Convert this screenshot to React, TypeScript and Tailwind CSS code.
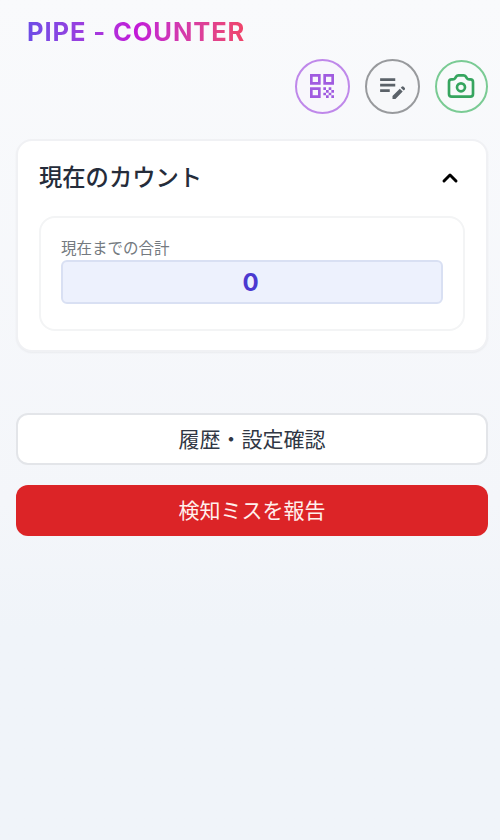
import { HiChevronUp, HiOutlineCamera } from "react-icons/hi";
import { MdEditNote, MdQrCode } from "react-icons/md";

export default function App() {
  return (
    <div className="h-[840px] w-[500px] overflow-hidden bg-linear-to-b from-[#f9fafc] via-[#f4f6fa] via-60% to-[#f0f4f9] to-75% font-['Inter','Noto_Sans_CJK_JP',sans-serif]">
      <header className="pt-[14px] pr-[12.5px] pl-[27px]">
        <h1 className="w-fit bg-linear-to-r from-[#6d4ce6] via-[#c218d8] via-50% to-[#f04468] bg-clip-text text-[25.5px] leading-[35px] font-bold tracking-[0.9px] whitespace-nowrap text-transparent">
          PIPE - COUNTER
        </h1>
        <div className="mt-[9.5px] flex items-center justify-end gap-[15px]">
          <button className="flex size-[55px] items-center justify-center rounded-full border-2 border-[#bf88ea] bg-[#f8f7fc] text-[#a05be0]">
            <MdQrCode size={32} />
          </button>
          <button className="flex size-[55px] items-center justify-center rounded-full border-2 border-[#989a9d] bg-[#f7f8fa] text-[#5b6269]">
            <MdEditNote size={33} />
          </button>
          <button className="flex size-[53px] items-center justify-center rounded-full border-2 border-[#7acb94] bg-[#f8fafb] text-[#36a55f]">
            <HiOutlineCamera size={32} />
          </button>
        </div>
      </header>
      <main className="pr-3 pl-4">
        <section className="mt-[25.5px] h-[213px] rounded-2xl border-2 border-[#f0f1f4] bg-white px-[21px] pt-[21px] shadow-xs">
          <div className="flex h-8 items-center justify-between">
            <h2 className="text-[23.3px] leading-8 font-medium text-[#252c3a]">現在のカウント</h2>
            <HiChevronUp size={30} className="text-black" />
          </div>
          <div className="mt-[22px] h-[115px] rounded-2xl border-2 border-[#f3f4f5] px-5 pt-[20px]">
            <p className="text-[15.5px] leading-[22px] text-[#747a80]">現在までの合計</p>
            <div className="flex h-11 items-center justify-center rounded-md border-2 border-[#d9e0f3] bg-[#edf1fd] pr-[3px] pt-px text-2xl font-bold text-[#4b39d0]">
              0
            </div>
          </div>
        </section>
        <button className="mt-[61px] flex h-[52px] w-full items-center justify-center rounded-xl border-2 border-[#e3e5e9] bg-white pt-px text-[21px] text-[#303744]">
          履歴・設定確認
        </button>
        <button className="mt-[20px] flex h-[51px] w-full items-center justify-center rounded-xl bg-[#dc2427] text-[21px] text-[#fff0ed]">
          検知ミスを報告
        </button>
      </main>
    </div>
  );
}
